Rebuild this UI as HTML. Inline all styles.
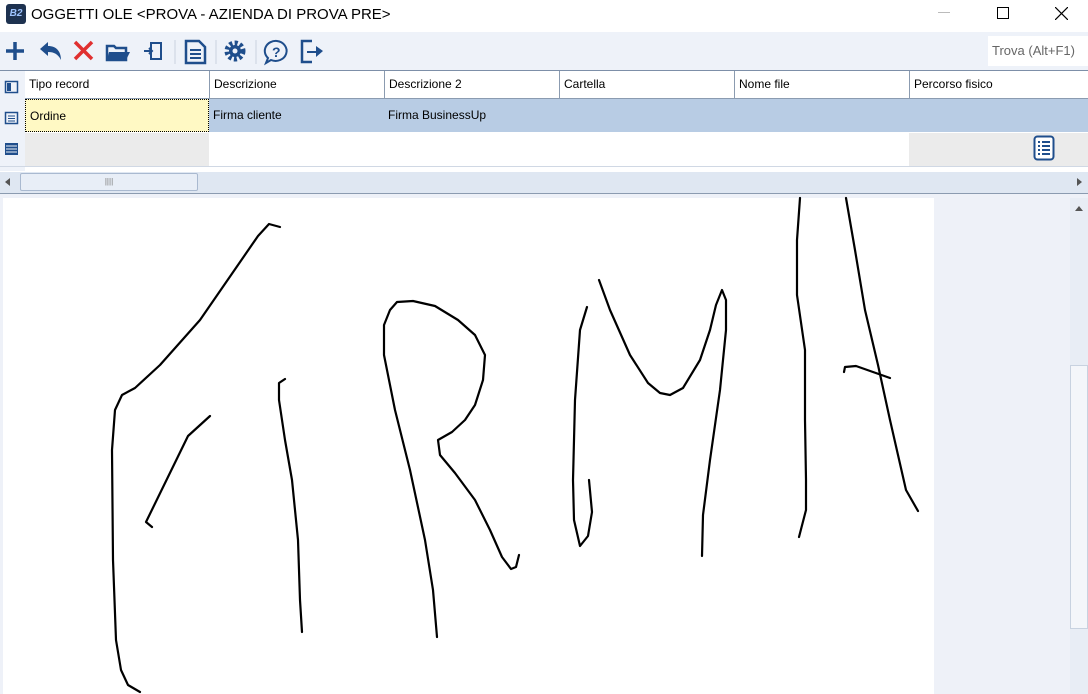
<!DOCTYPE html>
<html><head><meta charset="utf-8"><style>
*{margin:0;padding:0;box-sizing:border-box}
body{width:1088px;height:694px;overflow:hidden;background:#fff;font-family:"Liberation Sans","DejaVu Sans",sans-serif;font-size:12px;color:#000;position:relative}
.abs{position:absolute}
.title{left:0;top:0;width:1088px;height:32px;background:#fff}
.tb{left:0;top:32px;width:1088px;height:38px;background:#eef2f9}
.hdr{top:71px;height:28px;background:#fff;border-left:1px solid #8b9bb0;padding:6px 4px;font-size:12px}
.cell{padding:9px 4px;font-size:12px}
</style></head><body>
<div class="abs title">
 <div class="abs" style="left:6px;top:4px;width:20px;height:20px;background:#1e3250;border-radius:3px;color:#9fc4ff;font-size:10px;font-style:italic;font-weight:bold;text-align:center;line-height:20px">B2</div>
 <div class="abs" style="left:31px;top:6px;font-size:15px">OGGETTI OLE &lt;PROVA - AZIENDA DI PROVA PRE&gt;</div>
 <div class="abs" style="left:938px;top:12px;width:12px;height:1px;background:#bbb"></div>
 <div class="abs" style="left:997px;top:7px;width:12px;height:12px;border:1px solid #000"></div>
 <svg class="abs" style="left:1055px;top:7px" width="13" height="13"><path d="M0 0L13 13M13 0L0 13" stroke="#000" stroke-width="1.2"/></svg>
</div>
<div class="abs tb">
 <svg width="340" height="38">
  <path d="M15 10V28M6 19H24" stroke="#1f4e8c" stroke-width="3.5"/>
  <path d="M40 17L48 10V14C56 14 61 19 61 28C58 22 54 20 48 20V24Z" fill="#1f4e8c"/>
  <path d="M75 10L92 27M92 10L75 27" stroke="#e03030" stroke-width="3.5"/>
  <path d="M107 14H114L116 16H126V28H107Z" fill="none" stroke="#1f4e8c" stroke-width="2.5"/><path d="M109 20H130L126 28H107Z" fill="#1f4e8c"/>
  <rect x="151" y="11" width="10" height="16" fill="none" stroke="#1f4e8c" stroke-width="2"/><path d="M144 19H152M149 16L152 19L149 22" stroke="#1f4e8c" stroke-width="2" fill="none"/>
  <line x1="175" y1="8" x2="175" y2="32" stroke="#cbd3de"/>
  <path d="M186 9H199L205 15V31H186Z" fill="none" stroke="#1f4e8c" stroke-width="2.5"/><path d="M190 18H201M190 22H201M190 26H201" stroke="#1f4e8c" stroke-width="2"/>
  <line x1="216" y1="8" x2="216" y2="32" stroke="#cbd3de"/>
  <circle cx="235" cy="19" r="8" fill="none" stroke="#1f4e8c" stroke-width="5" stroke-dasharray="3 2.3"/><circle cx="235" cy="19" r="6" fill="#1f4e8c"/><circle cx="235" cy="19" r="2.5" fill="#eef2f9"/>
  <line x1="256" y1="8" x2="256" y2="32" stroke="#cbd3de"/>
  <path d="M277 9A11 10 0 1 1 271 28L266 31L268 26A11 10 0 0 1 277 9Z" fill="none" stroke="#1f4e8c" stroke-width="2"/>
  <text x="272" y="25" font-size="14" font-weight="bold" fill="#1f4e8c" font-family="Liberation Sans">?</text>
  <path d="M312 9H302V30H312" fill="none" stroke="#1f4e8c" stroke-width="2.5"/><path d="M307 19H316V14L323 19L316 25V21H307Z" fill="#1f4e8c"/>
 </svg>
 <div class="abs" style="left:988px;top:4px;width:100px;height:30px;background:#fff;color:#666;font-size:13px;padding:7px 4px">Trova (Alt+F1)</div>
</div>
<div class="abs" style="left:0;top:70px;width:1088px;height:1px;background:#7d8fa8"></div>
<div class="abs" style="left:0;top:71px;width:25px;height:100px;background:#eef2f9"></div>
<svg class="abs" style="left:4px;top:79px" width="16" height="80"><rect x="1.5" y="2.5" width="12" height="11" fill="none" stroke="#1f4e8c" stroke-width="1.5"/><rect x="3" y="4" width="4" height="8" fill="#1f4e8c"/>
<rect x="1.5" y="33.5" width="12" height="11" fill="none" stroke="#1f4e8c" stroke-width="1.5"/><path d="M4 37H11M4 39.5H11M4 42H11" stroke="#1f4e8c"/>
<rect x="1" y="64" width="13" height="12" fill="#1f4e8c"/><path d="M2 67H13M2 70H13M2 73H13" stroke="#eef2f9"/></svg>
<div class="abs hdr" style="left:25px;width:184px;border-left:none">Tipo record</div>
<div class="abs hdr" style="left:209px;width:175px">Descrizione</div>
<div class="abs hdr" style="left:384px;width:175px">Descrizione 2</div>
<div class="abs hdr" style="left:559px;width:175px">Cartella</div>
<div class="abs hdr" style="left:734px;width:175px">Nome file</div>
<div class="abs hdr" style="left:909px;width:179px">Percorso fisico</div>
<div class="abs" style="left:25px;top:98px;width:1063px;height:1px;background:#8b9bb0"></div>
<div class="abs" style="left:25px;top:99px;width:1063px;height:33px;background:#b8cce4"></div>
<div class="abs cell" style="left:25px;top:99px;width:184px;height:33px;background:#fff9c4;border:1px dotted #000">Ordine</div>
<div class="abs cell" style="left:209px;top:99px">Firma cliente</div>
<div class="abs cell" style="left:384px;top:99px">Firma BusinessUp</div>
<div class="abs" style="left:25px;top:133px;width:184px;height:33px;background:#ebebeb"></div>
<div class="abs" style="left:909px;top:133px;width:179px;height:33px;background:#ebebeb"></div>
<svg class="abs" style="left:1033px;top:135px" width="22" height="26"><rect x="1.5" y="1.5" width="19" height="23" rx="3" fill="#fff" stroke="#1f4e8c" stroke-width="2"/><path d="M5 7H7M9 7H17M5 11H7M9 11H17M5 15H7M9 15H17M5 19H7M9 19H17" stroke="#1f4e8c" stroke-width="2"/></svg>
<div class="abs" style="left:0;top:166px;width:1088px;height:1px;background:#d0d8e4"></div>
<div class="abs" style="left:0;top:172px;width:1088px;height:21px;background:#dfe7f2"></div>
<div class="abs" style="left:20px;top:173px;width:178px;height:18px;background:#e8eef7;border:1px solid #a9b9d0;border-radius:2px;text-align:center;font-size:8px;color:#777;line-height:16px">||||</div>
<div class="abs" style="left:5px;top:178px;width:0;height:0;border:4px solid transparent;border-right:5px solid #555;border-left:none"></div>
<div class="abs" style="left:1077px;top:178px;width:0;height:0;border:4px solid transparent;border-left:5px solid #555;border-right:none"></div>
<div class="abs" style="left:0;top:193px;width:1088px;height:1px;background:#8b9bb0"></div>
<div class="abs" style="left:0;top:194px;width:1088px;height:500px;background:#eef1f8"></div>
<div class="abs" style="left:3px;top:198px;width:931px;height:496px;background:#fff"></div>
<div class="abs" style="left:1070px;top:198px;width:18px;height:496px;background:#e8edf5"></div>
<div class="abs" style="left:1070px;top:365px;width:18px;height:264px;background:#f4f6fa;border:1px solid #c8d2e0"></div>
<div class="abs" style="left:1075px;top:206px;width:0;height:0;border:4px solid transparent;border-bottom:5px solid #555;border-top:none"></div>
<svg class="abs" style="left:0;top:0" width="1088" height="694" fill="none" stroke="#000" stroke-width="2.2" stroke-linejoin="round" stroke-linecap="round">
<polyline points="280,227 269,224 258,236 200,320 160,365 135,388 122,395 115,410 112,450 113,560 116,640 121,670 128,685 140,692"/>
<polyline points="210,416 188,436 146,522 152,527"/>
<polyline points="285,379 279,383 279,400 285,440 292,480 298,540 300,600 302,632"/>
<polyline points="437,637 433,590 425,540 410,470 395,410 384,355 384,325 390,310 397,302 413,301 435,306 458,320 475,335 485,355 483,380 475,405 465,420 452,432 438,440 440,455 455,473 475,500 490,530 502,557 511,569 516,567 519,555"/>
<polyline points="587,307 580,330 575,400 573,480 574,520 580,546 588,536 592,512 589,480"/>
<polyline points="599,280 610,310 630,355 648,383 660,393 670,395 683,388 700,360 710,330 716,305 722,290 726,300 726,330 720,390 710,460 703,515 702,556"/>
<polyline points="800,198 797,240 797,295 805,350 805,420 806,480 806,510 799,537"/>
<polyline points="846,198 855,250 865,310 878,365 890,420 898,455 906,490 918,511"/>
<polyline points="844,372 845,367 856,366 890,378"/>
</svg>
</body></html>
